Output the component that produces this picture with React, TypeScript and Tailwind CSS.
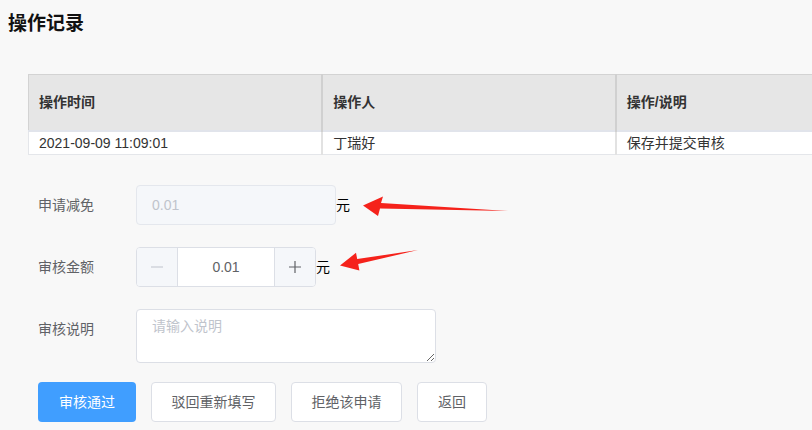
import React, { useState } from 'react';

const font = { fontFamily: '"Liberation Sans", "Noto Sans CJK SC", sans-serif' };

export default function App() {
  const [amount, setAmount] = useState(0.01);
  const [remark, setRemark] = useState('');

  const step = (d: number) => setAmount(a => Math.max(0, Math.round((a + d) * 100) / 100));

  return (
    <div className="relative w-[812px] h-[430px] overflow-hidden bg-[#f8f8f8] text-[#333]" style={font}>
      <h1 className="pl-2 pt-[10px] text-[19px] leading-[28px] font-bold text-[#111]">操作记录</h1>

      {/* 操作记录表格 */}
      <div className="mt-[36px] ml-[28px] w-[882px]">
        <table className="w-full border-collapse text-[14px] text-left">
          <thead>
            <tr className="h-[56px] bg-[#e6e6e6] border border-[#d3d3d3] border-b-2 border-b-[#e1e4eb]">
              <th className="w-[294px] px-[10px] font-bold border-r-2 border-[#d0d0d0]">操作时间</th>
              <th className="w-[294px] px-[10px] font-bold border-r-2 border-[#d0d0d0]">操作人</th>
              <th className="w-[294px] px-[10px] font-bold">操作/说明</th>
            </tr>
          </thead>
          <tbody>
            <tr className="h-[24px] bg-white border-x border-b border-[#e4e6ea]">
              <td className="px-[10px] border-r-2 border-[#e2e2e2] leading-[22px]">2021-09-09 11:09:01</td>
              <td className="px-[10px] border-r-2 border-[#e2e2e2] leading-[22px]">丁瑞好</td>
              <td className="px-[10px] leading-[22px]">保存并提交审核</td>
            </tr>
          </tbody>
        </table>
      </div>

      {/* 审核表单 */}
      <div className="pl-[38px] mt-[30px] text-[14px] text-[#606266]">
        <div className="flex items-center h-[40px]">
          <label className="w-[98px]">申请减免</label>
          <div className="w-[200px] h-[40px] flex items-center px-[15px] bg-[#f5f7fa] border border-[#e4e7ed] rounded text-[14px] text-[#c0c4cc] cursor-not-allowed">
            0.01
          </div>
          <span className="text-[14px] text-black">元</span>
        </div>

        <div className="flex items-center h-[40px] mt-[22px]">
          <label className="w-[98px]">审核金额</label>
          <div className="w-[180px] h-[40px] flex border border-[#dcdfe6] rounded overflow-hidden bg-white">
            <button onClick={() => step(-0.01)} className="w-[41px] bg-[#f5f7fa] border-r border-[#dcdfe6] flex items-center justify-center text-[#c0c4cc]">
              <svg width="14" height="14" viewBox="0 0 14 14"><path d="M1 7h12" stroke="currentColor" strokeWidth="1.2" /></svg>
            </button>
            <div className="flex-1 flex items-center justify-center text-[14px] text-[#606266]">{amount.toFixed(2)}</div>
            <button onClick={() => step(0.01)} className="w-[41px] bg-[#f5f7fa] border-l border-[#dcdfe6] flex items-center justify-center text-[#606266]">
              <svg width="14" height="14" viewBox="0 0 14 14"><path d="M1 7h12M7 1v12" stroke="currentColor" strokeWidth="1.2" /></svg>
            </button>
          </div>
          <span className="text-[14px] text-black">元</span>
        </div>

        <div className="flex items-start mt-[22px]">
          <label className="w-[98px] pt-[10px]">审核说明</label>
          <textarea
            value={remark}
            onChange={(e) => setRemark(e.target.value)}
            placeholder="请输入说明"
            className="w-[300px] h-[54px] px-[15px] py-[5px] bg-white border border-[#dcdfe6] rounded text-[14px] leading-[22px] text-[#606266] placeholder:text-[#c0c4cc] focus:outline-none"
          />
        </div>

        <div className="flex gap-[15px] mt-[19px] text-[14px]">
          <button className="w-[98px] h-[40px] rounded bg-[#409eff] text-white">审核通过</button>
          <button className="w-[125px] h-[40px] rounded bg-white border border-[#dcdfe6] text-[#606266]">驳回重新填写</button>
          <button className="w-[111px] h-[40px] rounded bg-white border border-[#dcdfe6] text-[#606266]">拒绝该申请</button>
          <button className="w-[70px] h-[40px] rounded bg-white border border-[#dcdfe6] text-[#606266]">返回</button>
        </div>
      </div>

      {/* 标注箭头 */}
      <svg className="absolute left-0 top-0 pointer-events-none" width="812" height="430" viewBox="0 0 812 430">
        <polygon points="363,205.5 383,196.5 381,203 508,211 380,208.5 378,216" fill="#f5221b" />
        <polygon points="340,265.5 356,252.8 357.2,259.1 418,250 358.2,264.1 359.4,270.4" fill="#f5221b" />
      </svg>
    </div>
  );
}
